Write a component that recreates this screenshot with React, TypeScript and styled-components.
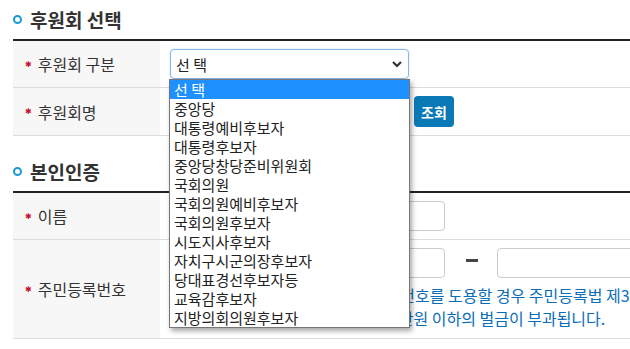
import React from 'react';
import styled, { createGlobalStyle } from 'styled-components';

const GlobalStyle = createGlobalStyle`
  html, body {
    margin: 0;
    padding: 0;
    background: #fff;
    overflow: hidden;
  }
  body {
    font-family: 'Noto Sans CJK KR', 'Noto Sans', sans-serif;
    color: #333;
  }
`

const Page = styled.div`
  position: relative;
  width: 900px;
  padding-left: 13px;
`

const Section = styled.section<{ first?: boolean }>`
  margin-top: ${({ first }) => (first ? '0' : '16px')};
`

const SectionTitle = styled.h3`
  display: flex;
  align-items: center;
  gap: 8px;
  height: 39px;
  margin: 0;
  font-size: 19px;
  font-weight: 700;
  color: #333;
`

const Ring = styled.span`
  display: inline-block;
  width: 9px;
  height: 9px;
  border-radius: 50%;
  border: 2.5px solid #1a9ad6;
  box-sizing: border-box;
`

const FormTable = styled.div`
  border-top: 2px solid #222;
`

const Row = styled.div`
  display: flex;
  border-bottom: 1px solid #ddd;
`

const Label = styled.div`
  width: 147px;
  flex-shrink: 0;
  box-sizing: border-box;
  display: flex;
  align-items: center;
  padding-left: 12px;
  background: #f7f7f7;
  font-size: 16px;
  color: #333;
`

const Required = styled.span`
  font-family: 'DejaVu Sans', sans-serif;
  color: #c8102e;
  font-size: 8px;
  margin-right: 6px;
`

const Field = styled.div`
  flex: 1;
  padding: 8px 10px;
`

const Inline = styled.div`
  display: flex;
  align-items: center;
`

const SelectBox = styled.div`
  position: relative;
  width: 239px;
  height: 30px;
  box-sizing: border-box;
  border: 1px solid #86b7e6;
  border-radius: 4px;
  box-shadow: 0 0 2px rgba(100, 160, 220, 0.4);
  display: flex;
  align-items: center;
  padding-left: 5px;
  font-size: 15px;
  color: #222;
`

const Chevron = styled.svg`
  position: absolute;
  right: 6px;
  top: 11px;
`

const TextInput = styled.div<{ w?: number; h?: number }>`
  width: ${({ w }) => w ?? 275}px;
  height: ${({ h }) => h ?? 30}px;
  flex-shrink: 0;
  box-sizing: border-box;
  border: 1px solid #ccc;
  border-radius: 4px;
  background: #fff;
`

const SearchButton = styled.button`
  height: 31px;
  width: 40px;
  margin-left: 6px;
  padding: 0;
  border: none;
  border-radius: 4px;
  background: #0b79b5;
  color: #fff;
  font-family: inherit;
  font-size: 14px;
  font-weight: 700;
`

const Dash = styled.span`
  display: inline-block;
  width: 12px;
  height: 3px;
  background: #444;
  margin: -5px 19px 0 21px;
`

const Note = styled.p`
  margin: 6px 0 0;
  text-indent: 5px;
  font-size: 16px;
  line-height: 23px;
  color: #0b6cb8;
  white-space: nowrap;
`

const Dropdown = styled.ul`
  position: absolute;
  left: 169px;
  top: 79px;
  width: 241px;
  margin: 0;
  padding: 0;
  list-style: none;
  box-sizing: border-box;
  border: 1px solid #767676;
  background: #fff;
  box-shadow: 2px 3px 5px rgba(0, 0, 0, 0.35);
  z-index: 10;
`

const Option = styled.li<{ active?: boolean }>`
  height: 19px;
  line-height: 19px;
  padding-left: 4px;
  font-size: 15px;
  color: ${({ active }) => (active ? '#fff' : '#222')};
  background: ${({ active }) => (active ? '#1e90ff' : 'transparent')};
`

const options = [
  '선 택',
  '중앙당',
  '대통령예비후보자',
  '대통령후보자',
  '중앙당창당준비위원회',
  '국회의원',
  '국회의원예비후보자',
  '국회의원후보자',
  '시도지사후보자',
  '자치구시군의장후보자',
  '당대표경선후보자등',
  '교육감후보자',
  '지방의회의원후보자',
]

export default function App() {
  return (
    <Page>
      <GlobalStyle />
      <Section first>
        <SectionTitle>
          <Ring />
          후원회 선택
        </SectionTitle>
        <FormTable>
          <Row>
            <Label>
              <Required>✱</Required>후원회 구분
            </Label>
            <Field>
              <SelectBox>
                선 택
                <Chevron width="10" height="7" viewBox="0 0 10 7">
                  <polyline points="1,1 5,5 9,1" fill="none" stroke="#333" strokeWidth="2.2" />
                </Chevron>
              </SelectBox>
            </Field>
          </Row>
          <Row>
            <Label>
              <Required>✱</Required>후원회명
            </Label>
            <Field>
              <Inline>
                <TextInput w={238} h={31} />
                <SearchButton>조회</SearchButton>
              </Inline>
            </Field>
          </Row>
        </FormTable>
      </Section>

      <Section>
        <SectionTitle>
          <Ring />
          본인인증
        </SectionTitle>
        <FormTable>
          <Row>
            <Label>
              <Required>✱</Required>이름
            </Label>
            <Field>
              <TextInput />
            </Field>
          </Row>
          <Row>
            <Label>
              <Required>✱</Required>주민등록번호
            </Label>
            <Field>
              <Inline>
                <TextInput />
                <Dash />
                <TextInput />
              </Inline>
              <Note>
                ※ 허위 또는 타인 명의의 주민등록번호를 도용할 경우 주민등록법 제37조에 의해
                <br />
                최대 3년 이하의 징역형 또는 3,000만원 이하의 벌금이 부과됩니다.
              </Note>
            </Field>
          </Row>
        </FormTable>
      </Section>

      <Dropdown>
        {options.map((o, i) => (
          <Option key={o} active={i === 0}>
            {o}
          </Option>
        ))}
      </Dropdown>
    </Page>
  );
}
